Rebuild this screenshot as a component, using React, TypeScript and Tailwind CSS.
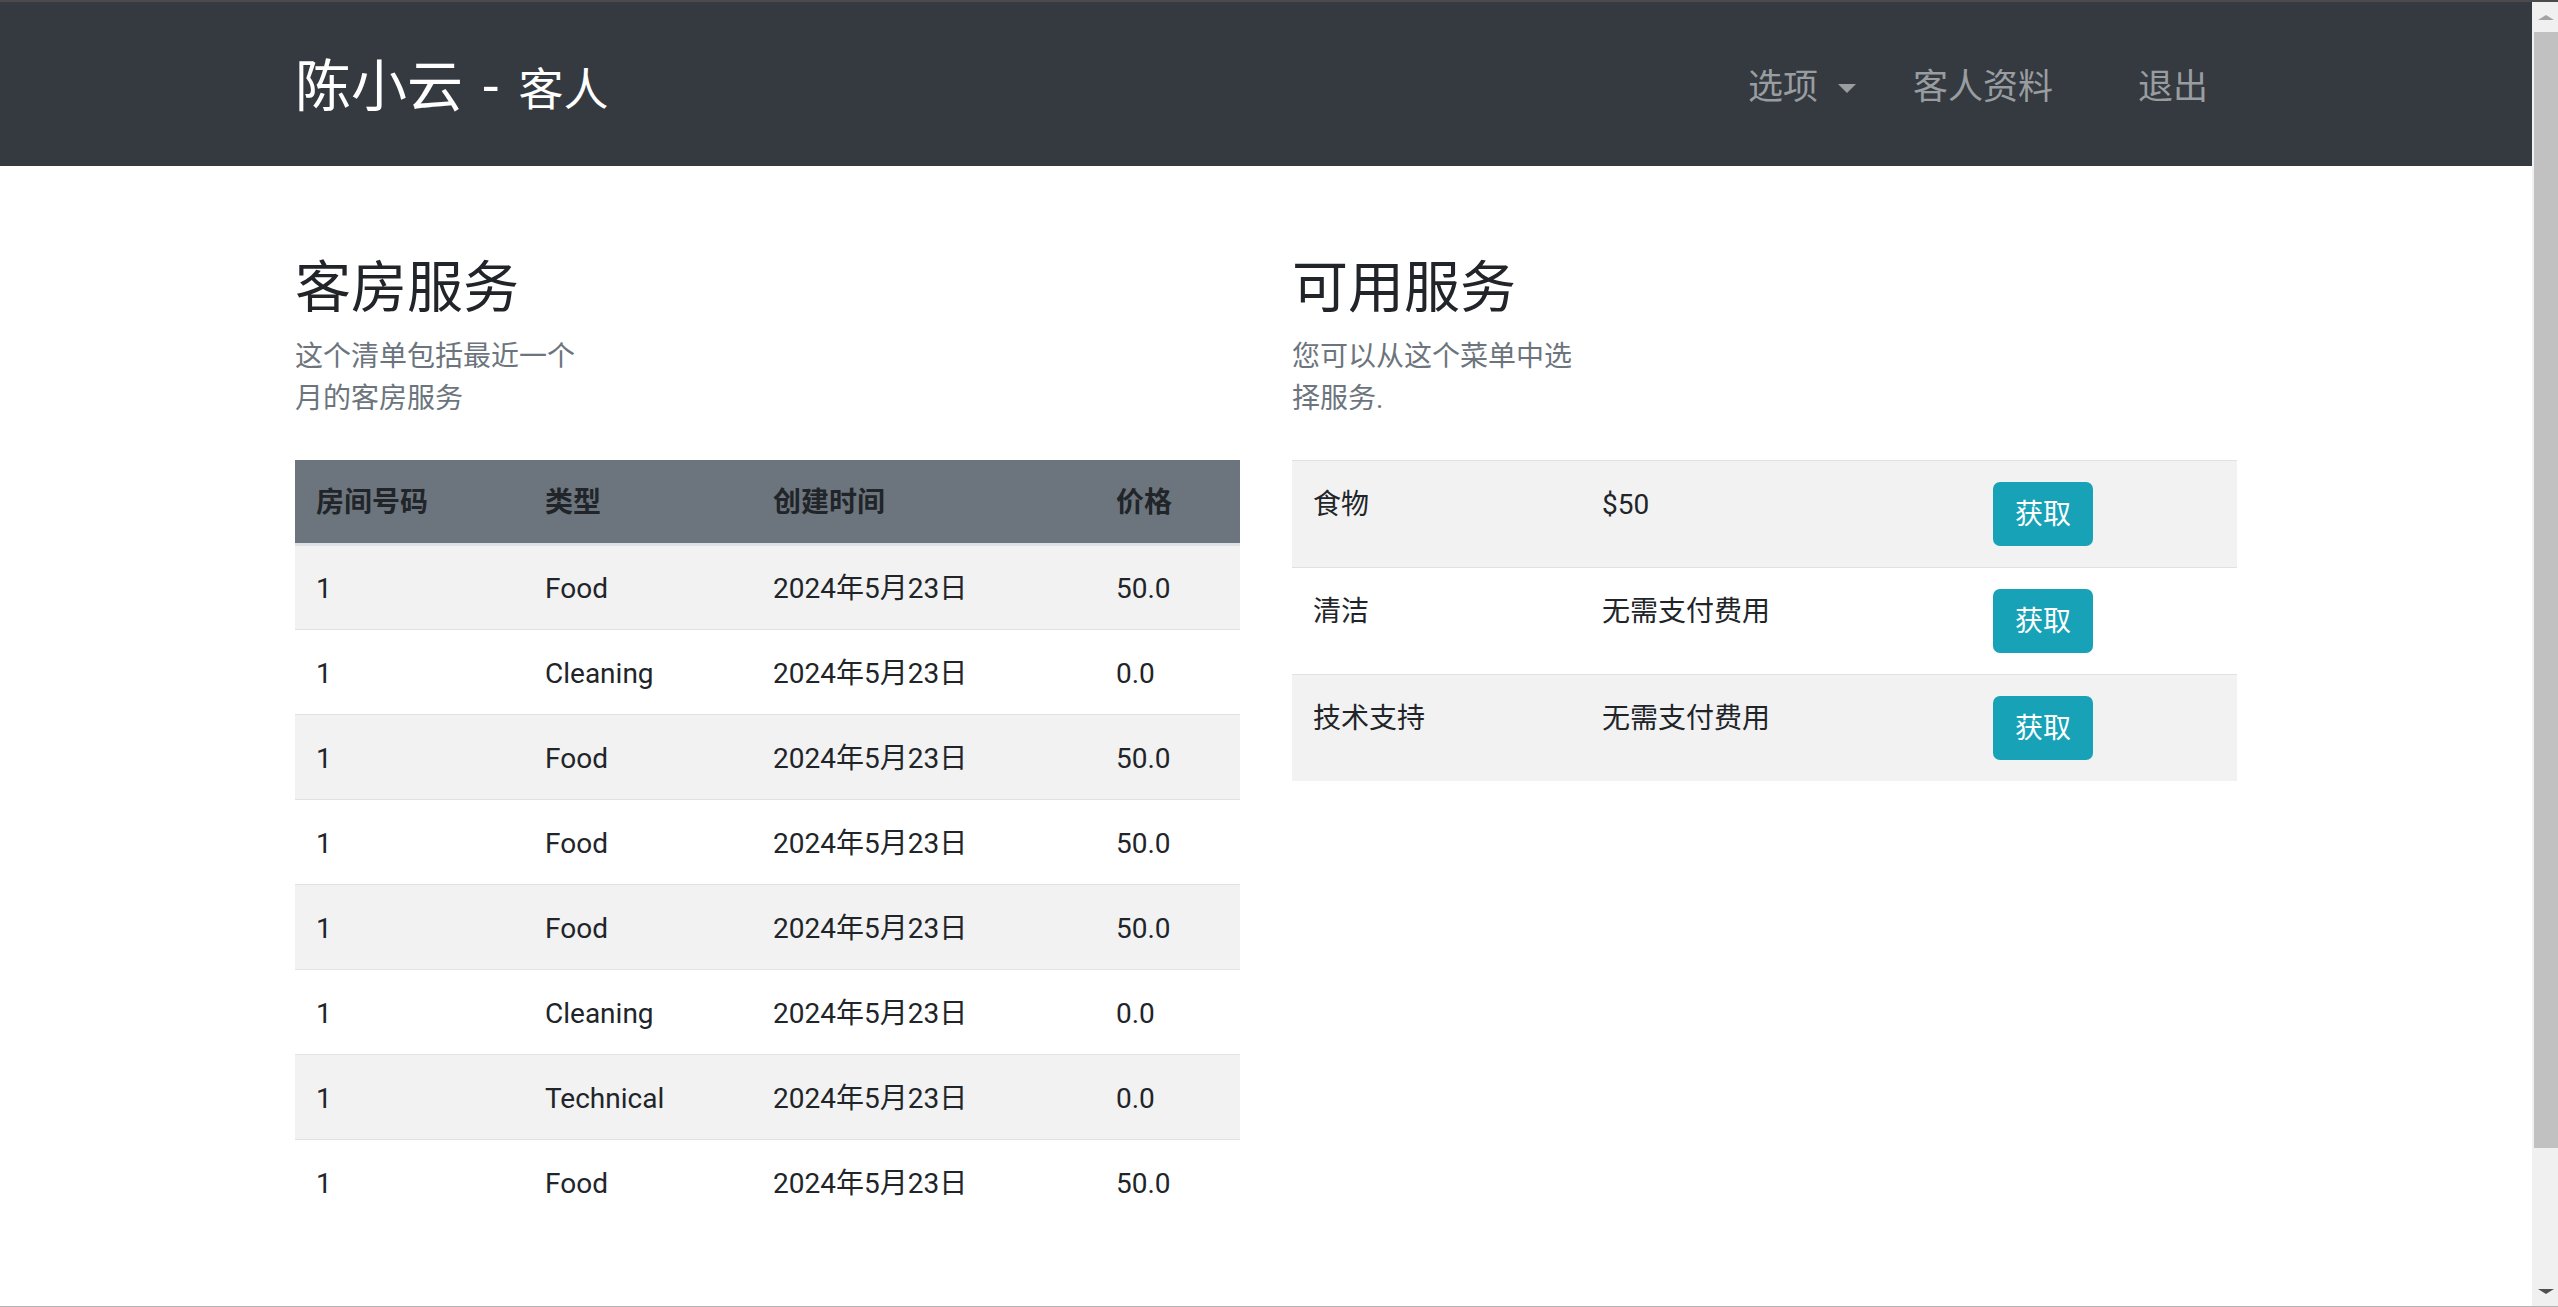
import React from "react";

const history = [
  { room: "1", type: "Food", date: "2024年5月23日", price: "50.0" },
  { room: "1", type: "Cleaning", date: "2024年5月23日", price: "0.0" },
  { room: "1", type: "Food", date: "2024年5月23日", price: "50.0" },
  { room: "1", type: "Food", date: "2024年5月23日", price: "50.0" },
  { room: "1", type: "Food", date: "2024年5月23日", price: "50.0" },
  { room: "1", type: "Cleaning", date: "2024年5月23日", price: "0.0" },
  { room: "1", type: "Technical", date: "2024年5月23日", price: "0.0" },
  { room: "1", type: "Food", date: "2024年5月23日", price: "50.0" },
];

const services = [
  { name: "食物", cost: "$50" },
  { name: "清洁", cost: "无需支付费用" },
  { name: "技术支持", cost: "无需支付费用" },
];

const Navbar = () => (
  <nav className="h-[164px] bg-[#343a40]">
    <div className="mx-auto flex h-full w-[1942px] items-center justify-between pt-[8px]">
      <a className="flex items-baseline leading-[1.2] text-white" href="#">
        <span className="text-[56px]">陈小云</span>
        <span className="ml-[20px] text-[56px]">-</span>
        <small className="ml-[20px] text-[45px]">客人</small>
      </a>
      <ul className="mr-[29px] flex items-center text-[35px] leading-[1.5] text-[#9a9da0]">
        <li className="flex items-center">
          <span>选项</span>
          <span className="ml-[20px] h-0 w-0 border-x-[9px] border-t-[9px] border-x-transparent border-t-[#9a9da0]" />
        </li>
        <li className="ml-[57px]">客人资料</li>
        <li className="ml-[85px]">退出</li>
      </ul>
    </div>
  </nav>
);

const SectionHead = ({ title, text }: { title: string; text: string }) => (
  <div>
    <h2 className="mb-[14px] text-[56px] leading-[1.2] font-normal text-[#212529]">{title}</h2>
    <p className="w-[292px] text-[28px] leading-[42px] text-[#6c757d]">{text}</p>
  </div>
);

const HistoryTable = () => (
  <table className="mt-[40px] w-full table-fixed border-collapse text-[28px] leading-[42px] text-[#212529]">
    <colgroup>
      <col className="w-[229px]" />
      <col className="w-[228px]" />
      <col className="w-[343px]" />
      <col />
    </colgroup>
    <thead className="bg-[#6c757d]">
      <tr className="h-[84px] border-b-[3px] border-[#dee2e6]">
        <th className="px-[21px] pt-[3px] text-left font-bold">房间号码</th>
        <th className="px-[21px] pt-[3px] text-left font-bold">类型</th>
        <th className="px-[21px] pt-[3px] text-left font-bold">创建时间</th>
        <th className="px-[21px] pt-[3px] text-left font-bold">价格</th>
      </tr>
    </thead>
    <tbody>
      {history.map((row, i) => (
        <tr
          className={`h-[85px] ${i % 2 === 0 ? "bg-[#f2f2f2]" : "bg-white"} ${i > 0 ? "border-t border-[#dee2e6]" : ""}`}
          key={i}
        >
          <td className="px-[21px] pt-[4px]">{row.room}</td>
          <td className="px-[21px] pt-[4px]">{row.type}</td>
          <td className="px-[21px] pt-[4px]">{row.date}</td>
          <td className="px-[21px] pt-[4px]">{row.price}</td>
        </tr>
      ))}
    </tbody>
  </table>
);

const ServiceTable = () => (
  <table className="mt-[40px] w-full table-fixed border-collapse text-[28px] leading-[42px] text-[#212529]">
    <colgroup>
      <col className="w-[289px]" />
      <col className="w-[391px]" />
      <col />
    </colgroup>
    <tbody>
      {services.map((s, i) => (
        <tr className={`border-t border-[#dee2e6] ${i % 2 === 0 ? "bg-[#f2f2f2]" : "bg-white"}`} key={s.name}>
          <td className="p-[21px] pt-[23px] align-top">{s.name}</td>
          <td className="p-[21px] pt-[23px] align-top">{s.cost}</td>
          <td className="p-[21px] align-top">
            <button className="h-[64px] w-[100px] rounded-[7px] bg-[#17a2b8] pt-[2px] text-[28px] leading-[42px] text-white">
              获取
            </button>
          </td>
        </tr>
      ))}
    </tbody>
  </table>
);

const Scrollbar = () => (
  <div className="flex w-[26px] flex-col bg-[#f0f0f0] pl-[2px]">
    <div className="flex h-[30px] items-center justify-center">
      <span className="h-0 w-0 border-x-[8px] border-b-[5px] border-x-transparent border-b-[#a3a3a3]" />
    </div>
    <div className="h-[1116px] bg-[#c1c1c1]" />
    <div className="flex-1" />
    <div className="flex h-[30px] items-center justify-center">
      <span className="h-0 w-0 border-x-[8px] border-t-[5px] border-x-transparent border-t-[#505050]" />
    </div>
  </div>
);

export default function App() {
  return (
    <div className="flex h-screen overflow-hidden border-t-2 border-b border-t-[#4b4b4b] border-b-[#b4b4b4] bg-white font-['Segoe_UI',Roboto,'Noto_Sans_CJK_SC',sans-serif]">
      <div className="min-w-0 flex-1">
        <Navbar />
        <main className="mx-auto grid w-[1942px] grid-cols-2 gap-x-[52px] pt-[89px]">
          <section>
            <SectionHead text="这个清单包括最近一个月的客房服务" title="客房服务" />
            <HistoryTable />
          </section>
          <section>
            <SectionHead text="您可以从这个菜单中选择服务." title="可用服务" />
            <ServiceTable />
          </section>
        </main>
      </div>
      <Scrollbar />
    </div>
  );
}
